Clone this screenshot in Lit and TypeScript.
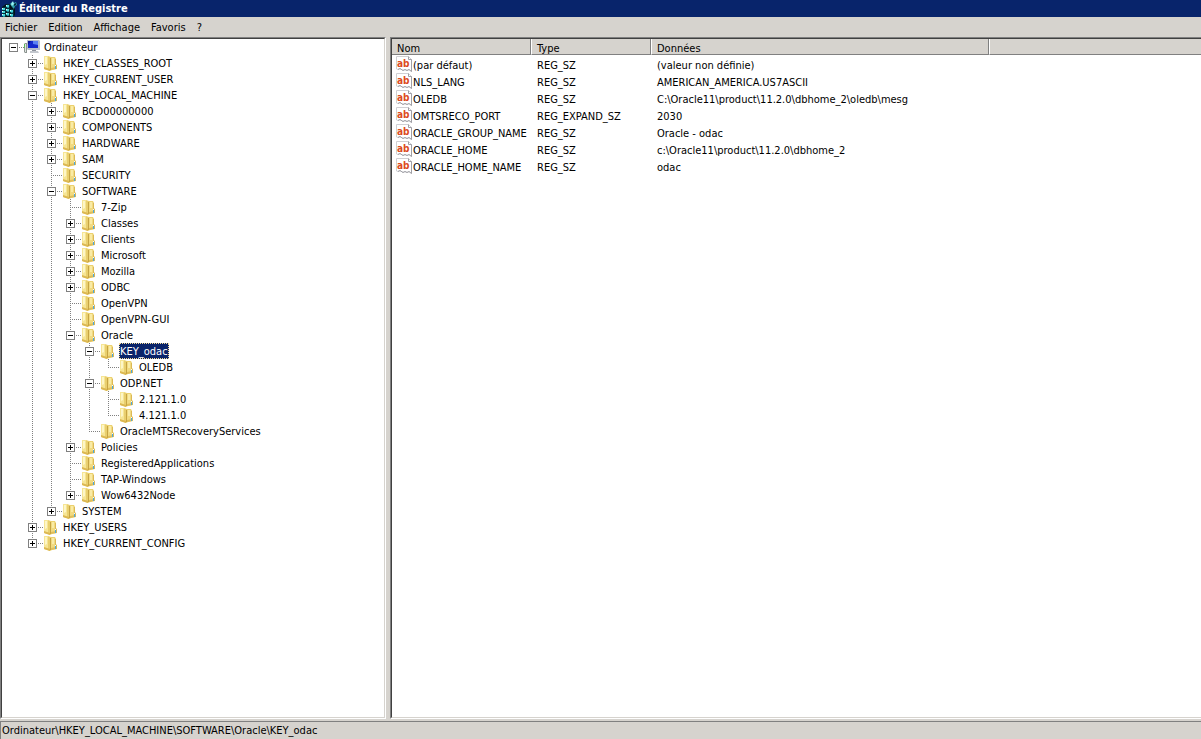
import { LitElement, html, svg, css, nothing, TemplateResult } from "lit";
import { customElement, property, state } from "lit/decorators.js";
import { classMap } from "lit/directives/class-map.js";

interface KeyNode {
  name: string;
  open?: boolean;
  closed?: boolean;
  children?: KeyNode[];
}

const leaf = (name: string): KeyNode => ({ name });
const shut = (name: string): KeyNode => ({ name, closed: true });
const open = (name: string, children: KeyNode[]): KeyNode => ({ name, open: true, children });

const ROOT: KeyNode = open("Ordinateur", [
  shut("HKEY_CLASSES_ROOT"),
  shut("HKEY_CURRENT_USER"),
  open("HKEY_LOCAL_MACHINE", [
    shut("BCD00000000"),
    shut("COMPONENTS"),
    shut("HARDWARE"),
    shut("SAM"),
    leaf("SECURITY"),
    open("SOFTWARE", [
      leaf("7-Zip"),
      shut("Classes"),
      shut("Clients"),
      shut("Microsoft"),
      shut("Mozilla"),
      shut("ODBC"),
      leaf("OpenVPN"),
      leaf("OpenVPN-GUI"),
      open("Oracle", [
        open("KEY_odac", [leaf("OLEDB")]),
        open("ODP.NET", [leaf("2.121.1.0"), leaf("4.121.1.0")]),
        leaf("OracleMTSRecoveryServices"),
      ]),
      shut("Policies"),
      leaf("RegisteredApplications"),
      leaf("TAP-Windows"),
      shut("Wow6432Node"),
    ]),
    shut("SYSTEM"),
  ]),
  shut("HKEY_USERS"),
  shut("HKEY_CURRENT_CONFIG"),
]);

const VALUES: [string, string, string][] = [
  ["(par défaut)", "REG_SZ", "(valeur non définie)"],
  ["NLS_LANG", "REG_SZ", "AMERICAN_AMERICA.US7ASCII"],
  ["OLEDB", "REG_SZ", "C:\\Oracle11\\product\\11.2.0\\dbhome_2\\oledb\\mesg"],
  ["OMTSRECO_PORT", "REG_EXPAND_SZ", "2030"],
  ["ORACLE_GROUP_NAME", "REG_SZ", "Oracle - odac"],
  ["ORACLE_HOME", "REG_SZ", "c:\\Oracle11\\product\\11.2.0\\dbhome_2"],
  ["ORACLE_HOME_NAME", "REG_SZ", "odac"],
];

const folderIcon = html`<svg class="icon" width="16" height="16" viewBox="0 0 16 16" aria-hidden="true">
  <path d="M1 1 H5 L8 2 H12 L13 4 V9 L14 10 V14 L9 15 L7 16 L1 14Z" fill="#ecd170"/>
  <path d="M1 1 H5 V14 L1 13Z" fill="#f6e595"/>
  <path d="M2 2 H4 V9 L2 10Z" fill="#fdf6c8"/>
  <path d="M5 2 H7 V15 L5 14Z" fill="#e9cf6e"/>
  <path d="M7 3 H8 V15 H7Z" fill="#c6a443"/>
  <path d="M8 3 H12 V13 L8 14Z" fill="#f1da80"/>
  <path d="M9 3 H11 V9 H9Z" fill="#f9eba6"/>
  <path d="M12 4 H13 V10 H14 V14 H12Z" fill="#dcb956"/>
  <path d="M1 12 L7 14 V16 L1 14Z" fill="#dcb852"/>
  <path d="M8 13 L13 12 V14 L8 15Z" fill="#e0be5a"/>
  <rect x="12" y="11" width="1" height="3" fill="#4aa8e0"/>
  <rect x="12" y="10" width="1" height="1" fill="#f4fbff"/>
</svg>`;

const computerIcon = html`<svg class="icon" width="16" height="16" viewBox="0 0 16 16" aria-hidden="true">
  <path d="M0 5 L1 4 H3 V14 H1 L0 13Z" fill="#8c9490"/>
  <path d="M1 5 H2 V13 H1Z" fill="#dfe4e0"/>
  <path d="M0 5 H1 V9 H0Z" fill="#5cb857"/>
  <path d="M3 1 H15 L16 2 V11 H4 L3 10Z" fill="#b6bccb"/>
  <path d="M4 2 H14 V9 H4Z" fill="#1429cc"/>
  <path d="M9 2 H14 V6 L9 5Z" fill="#5a80f2"/>
  <path d="M4 2 H7 L4 6Z" fill="#0a1496"/>
  <path d="M8 11 H12 V12 H8Z" fill="#8b909a"/>
  <path d="M6 12 H14 L15 14 H6Z" fill="#c3c7cd"/>
</svg>`;

const stringIcon = html`<svg class="icon" width="16" height="16" viewBox="0 0 16 16" aria-hidden="true">
  <path d="M0.500 0.500 H12.500 L15.500 3.500 V15.500 L13 13.500 L11 14.500 L9 13.500 L7 14.500 L4 12.500 L2 13.500 L0.500 13Z" fill="#fff" stroke="#d0d0d4"/>
  <path d="M12.500 0.500 V3.500 H15.500 V15.500 L13 13.500 L11 14.500 L9 13.500 L7 14.500 L4 12.500 L2 13.500" fill="none" stroke="#a0a0a6"/>
  <text class="ab" x="1" y="11">ab</text>
</svg>`;

/* One small lit cube with a dark outline. */
const cube = (x: number, y: number) => svg`
  <path d="M${x} ${y + 1} L${x + 1} ${y} H${x + 4} V${y + 3} L${x + 3} ${y + 4} H${x}Z" fill="#06303c"/>
  <rect x=${x} y=${y + 1} width="3" height="2" fill="#45d3d8"/>
  <rect x=${x} y=${y + 1} width="1" height="1" fill="#e4ffff"/>
  <rect x=${x + 1} y=${y + 3} width="2" height="1" fill="#1c8b98"/>`;

const regeditIcon = html`<svg class="icon" width="16" height="16" viewBox="0 0 16 16" aria-hidden="true">
  <path d="M0 6 L4 3 H9 L13 7 V14 L11 16 H0Z" fill="#02141c"/>
  ${[[4, 3], [0, 6], [4, 7], [8, 8], [0, 9], [4, 11], [0, 12], [8, 12]].map(([x, y]) => cube(x, y))}
  <path d="M8 3 L10 1 L12 2 L14 1 L15 4 L13 5 L12 8 L10 6Z" fill="#2f9fa8"/>
  <path d="M9 3 L11 0 L12 3 L10 5Z" fill="#9af2f2"/>
  <path d="M12 3 L14 2 L14 4 L12 5Z" fill="#052a36"/>
</svg>`;

@customElement("key-tree")
class KeyTree extends LitElement {
  @property() selected = "";
  @state() private collapsed = new Set<string>();

  static styles = css`
    :host { display: block; }
    ul { list-style: none; margin: 0; padding: 0; }
    .row { display: flex; height: 16px; align-items: center; white-space: nowrap; }
    .guide {
      flex: none;
      width: 19px;
      height: 16px;
      display: grid;
      grid-template: 4px 9px 3px / 4px 9px 6px;
      background-repeat: no-repeat;
      --dash-y: repeating-linear-gradient(to bottom, #808080 0 1px, transparent 1px 2px);
      --dash-x: repeating-linear-gradient(to right, #808080 0 1px, transparent 1px 2px);
    }
    .line { background-image: var(--dash-y); background-size: 1px 16px; background-position: 8px 0; }
    .tee {
      background-image: var(--dash-y), var(--dash-x);
      background-size: 1px 16px, 11px 1px;
      background-position: 8px 0, 8px 8px;
    }
    .end {
      background-image: var(--dash-y), var(--dash-x);
      background-size: 1px 9px, 11px 1px;
      background-position: 8px 0, 8px 8px;
    }
    .top { background-image: var(--dash-x); background-size: 11px 1px; background-position: 8px 8px; }
    .box {
      grid-area: 2 / 2;
      box-sizing: border-box;
      width: 9px;
      height: 9px;
      margin: 0;
      padding: 0;
      border: 1px solid #808080;
      border-radius: 0;
      background: #fff linear-gradient(#000, #000) center / 5px 1px no-repeat;
    }
    .box.plus {
      background-image: linear-gradient(#000, #000), linear-gradient(#000, #000);
      background-size: 5px 1px, 1px 5px;
      background-position: center;
      background-repeat: no-repeat;
    }
    .icon { flex: none; margin-right: 3px; }
    .name {
      font: inherit;
      line-height: 14px;
      color: inherit;
      border: 0;
      margin: 0;
      padding: 2px 1px 0;
      background: none;
      text-align: left;
    }
    .name.selected { background: #0a246a; color: #fff; outline: 1px dotted #f5db95; outline-offset: -1px; }
  `;

  private toggle(path: string) {
    const next = new Set(this.collapsed);
    next.has(path) ? next.delete(path) : next.add(path);
    this.collapsed = next;
  }

  private node(n: KeyNode, path: string, trail: boolean[], last: boolean): TemplateResult {
    const depth = trail.length;
    const expandable = !!(n.open || n.closed);
    const expanded = !!n.open && !this.collapsed.has(path);
    const own = { guide: true, top: depth === 0, end: depth > 0 && last, tee: depth > 0 && !last };
    return html`<li role="treeitem" aria-expanded=${expandable ? String(expanded) : nothing}>
      <div class="row">
        ${trail.map((more) => html`<span class=${classMap({ guide: true, line: more })}></span>`)}
        <span class=${classMap(own)}>
          ${expandable
            ? html`<button class=${classMap({ box: true, plus: !expanded })} aria-label=${n.name} @click=${() => this.toggle(path)}></button>`
            : nothing}
        </span>
        ${depth === 0 ? computerIcon : folderIcon}
        <button class=${classMap({ name: true, selected: n.name === this.selected })}
          @click=${() => (this.selected = n.name)}>${n.name}</button>
      </div>
      ${expanded && n.children
        ? html`<ul role="group">${n.children.map((c, i) =>
            this.node(c, `${path}\\${c.name}`, [...trail, depth > 0 && !last], i === n.children!.length - 1))}</ul>`
        : nothing}
    </li>`;
  }

  render() {
    return html`<ul role="tree">${this.node(ROOT, ROOT.name, [], true)}</ul>`;
  }
}

@customElement("value-list")
class ValueList extends LitElement {
  static styles = css`
    :host { display: block; }
    table { width: 100%; border-collapse: separate; border-spacing: 0; table-layout: fixed; }
    .c-name { width: 139px; }
    .c-type { width: 120px; }
    .c-data { width: 338px; }
    th {
      box-sizing: border-box;
      height: 16px;
      padding: 5px 0 0 5px;
      font-weight: normal;
      line-height: 10px;
      text-align: left;
      background: #d6d3ce;
      border-bottom: 1px solid #808080;
      border-right: 1px solid #808080;
      border-left: 1px solid #fff;
    }
    th:first-child { border-left: 0; }
    th:last-child { border-right: 0; }
    tbody::before { content: ""; display: table-row; height: 1px; }
    td { padding: 2px 0 0 6px; line-height: 15px; white-space: nowrap; vertical-align: top; }
    td:first-child { padding: 0 0 0 4px; }
    .entry { display: flex; align-items: flex-start; gap: 1px; height: 17px; }
    .entry span { padding-top: 2px; }
    .icon { flex: none; }
    .ab { font: bold 10px "DejaVu Sans Condensed", "DejaVu Sans", sans-serif; fill: #dc4a20; }
  `;

  render() {
    return html`<table>
      <colgroup><col class="c-name" /><col class="c-type" /><col class="c-data" /><col /></colgroup>
      <thead><tr><th>Nom</th><th>Type</th><th>Données</th><th></th></tr></thead>
      <tbody>
        ${VALUES.map(([name, type, data]) => html`<tr>
          <td><div class="entry">${stringIcon}<span>${name}</span></div></td>
          <td>${type}</td><td>${data}</td><td></td>
        </tr>`)}
      </tbody>
    </table>`;
  }
}

@customElement("app-root")
class AppRoot extends LitElement {
  static styles = css`
    :host {
      display: flex;
      flex-direction: column;
      height: 100vh;
      overflow: hidden;
      background: #d6d3ce;
      color: #000;
      font: 11px/16px "DejaVu Sans Condensed", "DejaVu Sans", sans-serif;
      cursor: default;
    }
    .title {
      flex: none;
      display: flex;
      align-items: center;
      gap: 1px;
      height: 17px;
      padding-left: 2px;
      background: #08246b;
      color: #fff;
    }
    h1 { margin: 0; font-size: 11px; font-weight: bold; }
    .menu { flex: none; display: flex; height: 20px; gap: 1px; }
    .menu button {
      font: inherit;
      color: inherit;
      border: 0;
      margin: 0;
      padding: 1px 5px 0;
      background: none;
    }
    .panes { flex: 1; min-height: 0; display: flex; gap: 4px; }
    .pane {
      box-sizing: border-box;
      background: #fff;
      border: 1px solid;
      border-color: #808080 #fff #fff #808080;
    }
    .inner {
      box-sizing: border-box;
      height: 100%;
      overflow: hidden;
      border: 1px solid;
      border-color: #404040 #d6d3ce #d6d3ce #404040;
    }
    .keys { flex: none; width: 386px; }
    .keys .inner { padding-left: 3px; }
    .values { flex: 1; min-width: 0; border-right: 0; }
    .values .inner { border-right: 0; }
    .status {
      flex: none;
      margin-top: 2px;
      padding: 1px 0 0 1px;
      border-top: 1px solid #808080;
      border-left: 1px solid #808080;
    }
  `;

  render() {
    return html`
      <header class="title">${regeditIcon}<h1>Éditeur du Registre</h1></header>
      <nav class="menu">
        ${["Fichier", "Edition", "Affichage", "Favoris", "?"].map((m) => html`<button>${m}</button>`)}
      </nav>
      <main class="panes">
        <section class="pane keys"><div class="inner"><key-tree selected="KEY_odac"></key-tree></div></section>
        <section class="pane values"><div class="inner"><value-list></value-list></div></section>
      </main>
      <footer class="status">Ordinateur\\HKEY_LOCAL_MACHINE\\SOFTWARE\\Oracle\\KEY_odac</footer>
    `;
  }
}
